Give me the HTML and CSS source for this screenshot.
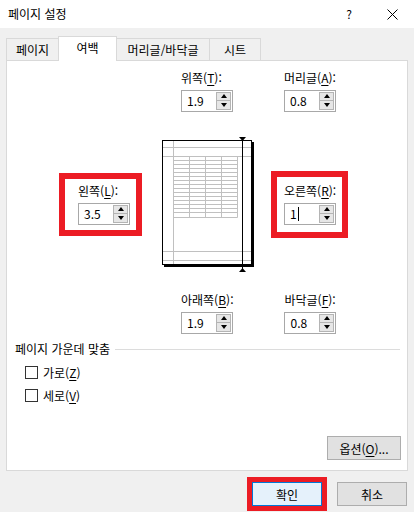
FILE: index.html
```html
<!DOCTYPE html>
<html lang="ko">
  <head>
    <meta charset="UTF-8" />
    <title>페이지 설정</title>
    <link rel="stylesheet" href="styles.css">
  </head>
  <body>
    <!-- 제목 표시줄 -->
    <div class="titlebar">
      <span class="title">페이지 설정</span>
      <span class="help">?</span>
      <span class="close">
        <svg width="11" height="11" viewBox="0 0 11 11">
          <path d="M0.5 0.5L10.5 10.5M10.5 0.5L0.5 10.5" stroke="#000" stroke-width="1" fill="none" />
        </svg>
      </span>
    </div>

    <!-- 탭 -->
    <div class="tabs">
      <div class="tab">페이지</div>
      <div class="tab active">여백</div>
      <div class="tab">머리글/바닥글</div>
      <div class="tab">시트</div>
    </div>

    <div class="panel">
      <div class="row-pair">
        <div class="field">
          <div class="label">위쪽(<u>T</u>):</div>
          <div class="spin"><span class="value">1.9</span><span class="arrows"><span class="up"></span><span class="down"></span></span></div>
        </div>
        <div class="field">
          <div class="label">머리글(<u>A</u>):</div>
          <div class="spin"><span class="value">0.8</span><span class="arrows"><span class="up"></span><span class="down"></span></span></div>
        </div>
      </div>

      <div class="row-mid">
        <div class="mark mark-left">
          <div class="field">
            <div class="label">왼쪽(<u>L</u>):</div>
            <div class="spin"><span class="value">3.5</span><span class="arrows"><span class="up"></span><span class="down"></span></span></div>
          </div>
        </div>

        <!-- 미리 보기 -->
        <svg class="preview" width="96" height="138" viewBox="0 0 96 138">
          <rect x="4" y="7" width="90" height="125" fill="#000" />
          <rect x="2.5" y="5.5" width="89" height="124" fill="#fff" stroke="#000" />
          <g stroke="#c0c0c0" fill="none">
            <path d="M13.5 6V129M3 12.5H91M3 21.5H91M3 116.5H91M3 125.5H91" />
            <path d="M29.5 21.5V82.5M45.5 21.5V82.5M61.5 21.5V82.5M77.5 21.5V82.5" />
            <path d="M13.5 25.5H77.5M13.5 29.5H77.5M13.5 33.5H77.5M13.5 37.5H77.5M13.5 41.5H77.5M13.5 45.5H77.5M13.5 49.5H77.5M13.5 53.5H77.5M13.5 57.5H77.5M13.5 61.5H77.5M13.5 65.5H77.5M13.5 69.5H77.5M13.5 73.5H77.5M13.5 77.5H77.5M13.5 82.5H77.5" />
          </g>
          <path d="M82.5 2V136" stroke="#000" />
          <path d="M79 2H86L82.5 6Z" fill="#000" />
          <path d="M79 137H86L82.5 133Z" fill="#000" />
        </svg>

        <div class="mark mark-right">
          <div class="field">
            <div class="label">오른쪽(<u>R</u>):</div>
            <div class="spin"><span class="value">1<span class="caret"></span></span><span class="arrows"><span class="up"></span><span class="down"></span></span></div>
          </div>
        </div>
      </div>

      <div class="row-pair row-bottom">
        <div class="field">
          <div class="label">아래쪽(<u>B</u>):</div>
          <div class="spin"><span class="value">1.9</span><span class="arrows"><span class="up"></span><span class="down"></span></span></div>
        </div>
        <div class="field">
          <div class="label">바닥글(<u>F</u>):</div>
          <div class="spin"><span class="value">0.8</span><span class="arrows"><span class="up"></span><span class="down"></span></span></div>
        </div>
      </div>

      <!-- 페이지 가운데 맞춤 -->
      <div class="group">
        <div class="group-title">페이지 가운데 맞춤</div>
        <div class="check"><span class="box"></span><span>가로(<u>Z</u>)</span></div>
        <div class="check"><span class="box"></span><span>세로(<u>V</u>)</span></div>
      </div>

      <div class="panel-foot">
        <button class="btn btn-wide">옵션(<u>O</u>)...</button>
      </div>
    </div>

    <div class="footer">
      <span class="mark-btn"><button class="btn primary">확인</button></span>
      <button class="btn">취소</button>
    </div>
  </body>
</html>
```

FILE: styles.css
```css
* {
  box-sizing: border-box;
}
body {
  margin: 0;
  width: 414px;
  height: 512px;
  background-color: #f0f0f0;
  font-family: "Noto Sans CJK KR", "Noto Sans", sans-serif;
  font-size: 12px;
  line-height: 16px;
  color: #000;
  overflow: hidden;
}
u {
  text-decoration-thickness: 1px;
  text-underline-offset: 2px;
}
.titlebar {
  height: 28px;
  background-color: #fff;
  display: flex;
  align-items: center;
  padding-left: 8px;
}
.title {
  flex: 1;
}
.help {
  width: 44px;
  text-align: center;
}
.close {
  width: 43px;
  display: flex;
  justify-content: center;
  align-items: center;
}
.tabs {
  height: 32px;
  display: flex;
  align-items: flex-end;
  padding-left: 6px;
}
.tab {
  height: 22px;
  padding: 0;
  white-space: nowrap;
  border: 1px solid #d9d9d9;
  border-bottom: none;
  margin-left: -1px;
  display: flex;
  align-items: center;
  justify-content: center;
}
.tab:first-child {
  margin-left: 0;
  width: 53px;
}
.tab.active {
  height: 25px;
  width: 59px;
  margin-bottom: -1px;
  padding-bottom: 3px;
  background-color: #fff;
  position: relative;
  z-index: 1;
}
.tab:nth-child(3) {
  width: 94px;
}
.tab:nth-child(4) {
  width: 52px;
}
.panel {
  margin: 0 6px;
  height: 411px;
  border: 1px solid #d9d9d9;
  background-color: #fff;
  display: flex;
  flex-direction: column;
}
.row-pair {
  display: flex;
  gap: 51px;
  padding-left: 174px;
  padding-top: 9px;
}
.row-bottom {
  padding-top: 19px;
}
.field {
  display: flex;
  flex-direction: column;
  gap: 4px;
}
.label {
  white-space: nowrap;
}
.spin {
  width: 52px;
  height: 22px;
  border: 1px solid #a8a8a8;
  background-color: #fff;
  display: flex;
  align-items: center;
  padding-left: 5px;
}
.value {
  display: flex;
  align-items: center;
}
.caret {
  display: inline-block;
  width: 1px;
  height: 14px;
  background-color: #000;
  margin-left: 1px;
}
.arrows {
  margin-left: auto;
  margin-right: 1px;
  width: 15px;
  height: 18px;
  margin-bottom: 1px;
  display: flex;
  flex-direction: column;
}
.arrows span {
  flex: 1;
  border: 1px solid #b4b4b4;
  background-color: #e6e6e6;
  display: flex;
  align-items: center;
  justify-content: center;
}
.arrows .down {
  border-top: none;
}
.up::before {
  content: "";
  border-left: 3px solid transparent;
  border-right: 3px solid transparent;
  border-bottom: 4px solid #000;
}
.down::before {
  content: "";
  border-left: 3px solid transparent;
  border-right: 3px solid transparent;
  border-top: 4px solid #000;
}
.row-mid {
  display: flex;
  align-items: center;
  margin-top: 23px;
  height: 138px;
}
.mark {
  border: 6px solid #ec1c24;
  display: flex;
  align-items: center;
}
.mark-left {
  margin-left: 52px;
  width: 83px;
  height: 63px;
  padding-left: 13px;
}
.preview {
  margin-left: 18px;
  display: block;
}
.mark-right {
  margin-left: 15px;
  width: 77px;
  height: 67px;
  padding-left: 7px;
}
.group {
  margin-top: 7px;
}
.group-title {
  display: flex;
  align-items: center;
  padding-left: 8px;
  padding-right: 7px;
  gap: 5px;
}
.group-title::after {
  content: "";
  flex: 1;
  height: 1px;
  background-color: #dcdcdc;
}
.check {
  height: 23px;
  display: flex;
  align-items: center;
  gap: 5px;
  padding-left: 18px;
}
.group-title + .check {
  margin-top: 4px;
}
.box {
  width: 13px;
  height: 13px;
  border: 1px solid #333;
  background-color: #fff;
}
.panel-foot {
  margin-top: auto;
  display: flex;
  justify-content: flex-end;
  padding: 0 6px 10px 0;
}
.btn {
  width: 70px;
  height: 24px;
  border: 1px solid #adadad;
  background-color: #e1e1e1;
  font-family: inherit;
  font-size: 12px;
  color: #000;
  padding: 0;
  display: block;
}
.btn-wide {
  width: 74px;
}
.btn.primary {
  background-color: #e5f1fb;
  border-color: #0078d7;
}
.footer {
  display: flex;
  justify-content: flex-end;
  align-items: flex-start;
  padding-top: 6px;
  padding-right: 7px;
  gap: 10px;
}
.footer > .btn {
  margin-top: 5px;
}
.mark-btn {
  border: 5px solid #ec1c24;
  display: block;
}
```
